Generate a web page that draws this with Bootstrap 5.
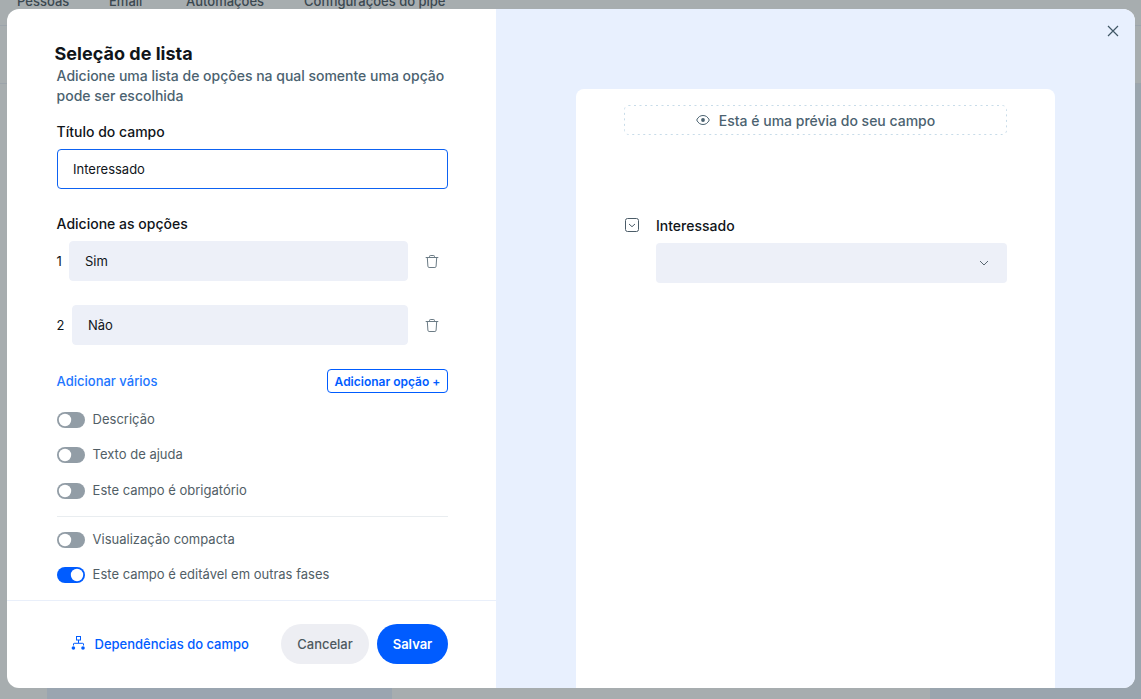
<!DOCTYPE html>
<html lang="pt-BR">
<head>
<meta charset="utf-8">
<meta name="viewport" content="width=device-width, initial-scale=1">
<title>Seleção de lista</title>
<link href="https://cdn.jsdelivr.net/npm/bootstrap@5.3.0/dist/css/bootstrap.min.css" rel="stylesheet">
<style>
body{font-family:Inter,"Liberation Sans",sans-serif;font-size:14px;line-height:20px;color:#10151a;background:#a7adaf;height:699px;overflow:hidden}
.pagebar{height:26px;border-bottom:1px solid #9ca4ab;color:#3a474f;font-size:13px;font-weight:500;padding-left:17px}
.pagebar span{margin-top:-9px;white-space:nowrap}
.subbar{height:58px;border-bottom:1px solid #9ca4ab}
.board{height:615px}
.lane-a{margin-left:47px;width:345px;background:#9aa5b0}
.lane-b{width:211px;background:#9aa5ae}
.dialog-box{left:7px;top:9px;width:1128px;height:679px;border-radius:12px}
.form-pane{width:489px}
.form-body{height:592px;padding:33px 48px 0 50px;border-bottom:1px solid #e9effa}
.preview-pane{background:#e8f0fe;padding:80px 80px 0}
.title-main{font-size:18px;line-height:24px;font-weight:650;margin:0 0 0 -2.500px;letter-spacing:.02px}
.subtitle{color:#4b6270;font-weight:500;line-height:20px;margin-bottom:16px;margin-left:-.4px;letter-spacing:-.01px}
.lbl{font-weight:500;line-height:20px}
.form-body .lbl{margin-left:-.4px}
.form-control.field{height:40px;border-radius:4px;font-size:13px;padding:0 15px;border:1px solid #edf0f8;background:#edf0f8;color:#10151a}
.form-control.field.active{background:#fff;border-color:#0d62f2}
.num{font-size:13px;text-indent:-.4px}
.trash{width:40px;padding-left:8px}
.trash svg{margin-top:-3px}
.lnk{color:#2176ff;font-size:13px;font-weight:500;text-decoration:none;margin-left:-.4px}
.btn.add{height:24px;width:121px;padding:1px 0 0;border:1px solid #005cff;color:#005cff;border-radius:4px;font-size:12px;font-weight:600;line-height:22px}
.form-switch.sw{min-height:0;padding:0;margin:0;font-size:13px;line-height:20px;color:#515e66;gap:7.6px}
.form-switch.sw .sw-text{margin-top:-1px;margin-bottom:1px}
.form-switch.sw .form-check-input{width:28px;height:16px;margin:0;float:none;border:0;background-color:#929da6;background-size:16px 16px;background-image:url("data:image/svg+xml,%3Csvg xmlns='http://www.w3.org/2000/svg' viewBox='0 0 16 16'%3E%3Ccircle cx='8' cy='8' r='6.2' fill='white'/%3E%3C/svg%3E")}
.form-switch.sw .form-check-input:checked{background-color:#005cff}
.rule{height:1px;background:#e9edf0}
.form-foot{height:87px;padding:0 48px 2px 63.500px}
.dep{color:#005cff;font-size:13px;font-weight:500;text-decoration:none}
.btn.pill{height:40px;font-size:13px;font-weight:500;border:0;padding:2px 0 0}
.btn.cancel{width:88px;background:#edeef3;color:#4e5960}
.btn.save{width:71px;background:#005cff;color:#fff;font-weight:600}
.preview-card{width:479px;height:599px;border-radius:8px 8px 0 0;padding:16px 48px 0}
.hint{height:30px;color:#4b6270;font-weight:500}
.hint rect{fill:none;stroke:#c8dce9;stroke-dasharray:2 3.500}
.pv-field{margin-top:81px}
.select-box{height:40px;border-radius:4px;background:#edf0f8;padding-right:17px}
.closer{right:13px;top:13px;width:18px;height:18px;background:none;border:0;padding:0;line-height:0}
svg{flex:none}
</style>
</head>
<body>
<div class="pagebar d-flex"><span style="width:92px">Pessoas</span><span style="width:77px">Email</span><span style="width:118px">Automações</span><span>Configurações do pipe</span></div>
<div class="subbar"></div>
<div class="board d-flex justify-content-between"><div class="lane-a"></div><div class="lane-b"></div></div>

<div class="dialog-box position-absolute d-flex bg-white overflow-hidden" role="dialog">
  <section class="form-pane d-flex flex-column">
    <div class="form-body">
      <h1 class="title-main">Seleção de lista</h1>
      <p class="subtitle">Adicione uma lista de opções na qual somente uma opção pode ser escolhida</p>
      <label class="lbl d-block" for="t">Título do campo</label>
      <input id="t" class="form-control field active" style="margin:7px 0 25px" value="Interessado">
      <div class="lbl">Adicione as opções</div>
      <div class="d-flex align-items-center" style="margin:7px 0 24px"><span class="num" style="width:12px">1</span><input class="form-control field flex-fill w-auto" value="Sim"><span class="trash text-center"><svg width="14" height="16" viewBox="0 0 14 16" fill="none" stroke="#6b7b85"><path d="M.7 4.500h12.6M4.600 4V3.200q0-.7.7-.7h3.400q.7 0 .7.700V4M2.300 4.500l.6 8.700q.1 1.300 1.200 1.300h5.800q1.100 0 1.200-1.300l.6-8.700"/></svg></span></div>
      <div class="d-flex align-items-center"><span class="num" style="width:15px">2</span><input class="form-control field flex-fill w-auto" value="Não"><span class="trash text-center"><svg width="14" height="16" viewBox="0 0 14 16" fill="none" stroke="#6b7b85"><path d="M.7 4.500h12.6M4.600 4V3.200q0-.7.7-.7h3.400q.7 0 .7.700V4M2.300 4.500l.6 8.700q.1 1.300 1.200 1.300h5.800q1.100 0 1.200-1.300l.6-8.700"/></svg></span></div>
      <div class="d-flex align-items-center justify-content-between" style="margin:24px 0 17px"><a class="lnk" href="#">Adicionar vários</a><button class="btn add">Adicionar opção +</button></div>
      <label class="form-check form-switch sw d-flex align-items-center"><input class="form-check-input" type="checkbox"><span class="sw-text">Descrição</span></label>
      <label class="form-check form-switch sw d-flex align-items-center" style="margin-top:15px"><input class="form-check-input" type="checkbox"><span class="sw-text">Texto de ajuda</span></label>
      <label class="form-check form-switch sw d-flex align-items-center" style="margin-top:16px"><input class="form-check-input" type="checkbox"><span class="sw-text">Este campo é obrigatório</span></label>
      <div class="rule" style="margin:15px 0 13px"></div>
      <label class="form-check form-switch sw d-flex align-items-center"><input class="form-check-input" type="checkbox"><span class="sw-text">Visualização compacta</span></label>
      <label class="form-check form-switch sw d-flex align-items-center" style="margin-top:15px"><input class="form-check-input" type="checkbox" checked><span class="sw-text">Este campo é editável em outras fases</span></label>
    </div>
    <div class="form-foot d-flex align-items-center">
      <a class="dep d-flex align-items-center me-auto" href="#"><svg class="me-2" width="16" height="16" viewBox="0 0 16 16" fill="none" stroke="#005cff"><rect x="5.500" y=".5" width="4" height="3.500"/><path d="M7.500 4v3M2.500 9.500V8q0-.7.7-.7h8.600q.7 0 .7.700v1.500"/><circle cx="2.400" cy="12" r="1.800" fill="#005cff" stroke="none"/><circle cx="12" cy="12" r="1.800" fill="#005cff" stroke="none"/></svg>Dependências do campo</a>
      <button class="btn pill cancel rounded-pill me-2">Cancelar</button><button class="btn pill save rounded-pill">Salvar</button>
    </div>
  </section>
  <section class="preview-pane flex-fill">
    <div class="preview-card bg-white">
      <div class="hint d-flex align-items-center justify-content-center position-relative">
        <svg class="position-absolute top-0 start-0" width="383" height="30"><rect x=".5" y=".5" width="382" height="29" rx="4"/></svg>
        <svg width="14" height="12" viewBox="0 0 14 12" fill="none" stroke="#4b6270" style="margin-right:9px"><path d="M.7 6Q2.800 1.500 7 1.500T13.300 6Q11.200 10.500 7 10.500T.7 6Z"/><circle cx="7" cy="6" r="1.900" fill="#4b6270" stroke="none"/></svg><span style="padding-top:2px">Esta é uma prévia do seu campo</span>
      </div>
      <div class="pv-field d-flex"><svg style="margin-top:2px" width="16" height="16" viewBox="0 0 16 16" fill="none" stroke="#4b5c68"><rect x="1.500" y=".5" width="13" height="13" rx="2"/><path d="m5 6 3 2.700L11 6"/></svg>
        <div class="flex-fill" style="margin-left:16px"><div class="lbl" style="margin-bottom:7px">Interessado</div><div class="select-box d-flex align-items-center justify-content-end"><svg width="12" height="8" viewBox="0 0 12 8" fill="none" stroke="#5a6872"><path d="m2 2 4 4 4-4"/></svg></div></div>
      </div>
    </div>
  </section>
  <button class="closer position-absolute" aria-label="Fechar"><svg width="18" height="18" viewBox="0 0 18 18" stroke="#405766" stroke-width="1.200"><path d="m4 4 10 10M14 4 4 14"/></svg></button>
</div>
<script src="https://cdn.jsdelivr.net/npm/bootstrap@5.3.0/dist/js/bootstrap.bundle.min.js"></script>
</body>
</html>
